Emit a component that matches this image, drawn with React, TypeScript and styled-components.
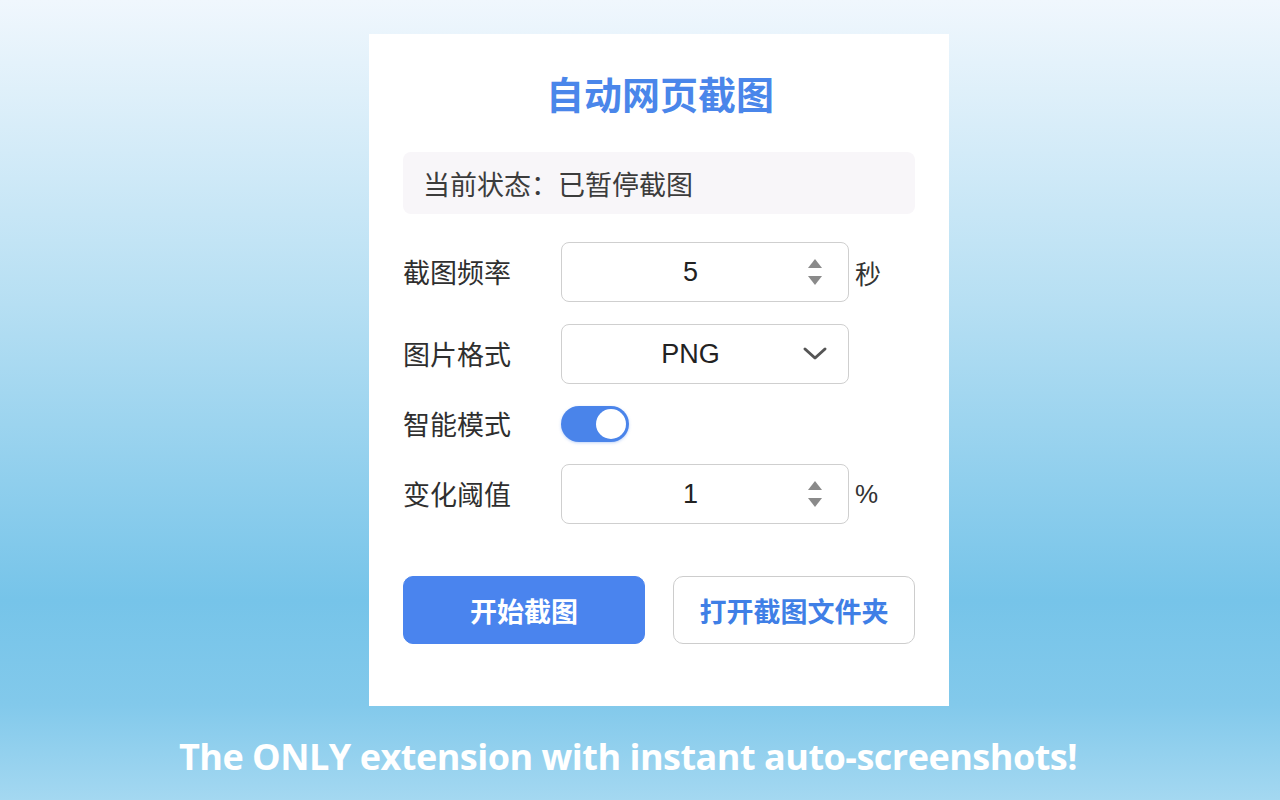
import React from 'react'
import styled, { createGlobalStyle } from 'styled-components'

const GlobalStyle = createGlobalStyle`
  html, body {
    margin: 0;
    padding: 0;
    height: 100%;
  }
  body {
    font-family: 'Noto Sans CJK SC', 'Noto Sans', sans-serif;
  }
`

const Page = styled.div`
  width: 1280px;
  height: 800px;
  overflow: hidden;
  display: flex;
  flex-direction: column;
  align-items: center;
  padding-top: 34px;
  box-sizing: border-box;
  background: linear-gradient(to bottom, #f0f7fd 0%, #b6dff3 38%, #76c4e9 75%, #82c9eb 88%, #a4d8f1 100%);
`

const Card = styled.div`
  width: 580px;
  height: 672px;
  margin-left: 38px;
  box-sizing: border-box;
  background: #fff;
  padding: 33px 34px 0;
  display: flex;
  flex-direction: column;
`

const Title = styled.h1`
  margin: 0;
  text-align: center;
  font-size: 38px;
  line-height: 52px;
  font-weight: 700;
  color: #4a86ea;
  padding-left: 2px;
`

const Status = styled.div`
  margin-top: 33px;
  height: 62px;
  border-radius: 8px;
  background: #f8f6f9;
  display: flex;
  align-items: center;
  padding-left: 20px;
  font-size: 27px;
  color: #3c3c3c;
`

const Form = styled.div`
  margin-top: 28px;
  display: flex;
  flex-direction: column;
  gap: 22px;
`

const Row = styled.div`
  display: flex;
  align-items: center;
`

const Label = styled.div`
  width: 158px;
  font-size: 27px;
  line-height: 36px;
  color: #2f2f2f;
`

const Field = styled.div`
  width: 288px;
  height: 60px;
  box-sizing: border-box;
  border: 1px solid #cfcfcf;
  border-radius: 8px;
  display: flex;
  align-items: center;
  font-family: 'Liberation Sans', Arial, sans-serif;
  font-size: 27px;
  color: #222;
`

const Value = styled.div`
  flex: 1;
  text-align: center;
  padding-left: 37px;
`

const Side = styled.div`
  width: 66px;
  display: flex;
  justify-content: center;
  align-items: center;
`

const Unit = styled.div<{ $latin?: boolean }>`
  margin-left: 6px;
  font-size: 26px;
  color: #333;
  font-family: ${p => (p.$latin ? "'Liberation Sans', Arial, sans-serif" : "'Noto Sans CJK SC', sans-serif")};
`

const Toggle = styled.div`
  width: 68px;
  height: 36px;
  border-radius: 18px;
  background: #4a84ea;
  display: flex;
  align-items: center;
  justify-content: flex-end;
  padding-right: 3px;
  box-sizing: border-box;
  box-shadow: 0 1px 3px rgba(74, 132, 234, 0.35);
`

const Knob = styled.div`
  width: 30px;
  height: 30px;
  border-radius: 50%;
  background: #fff;
`

const Buttons = styled.div`
  margin-top: 52px;
  display: flex;
  justify-content: space-between;
`

const Button = styled.button<{ $primary?: boolean }>`
  width: 242px;
  height: 68px;
  border-radius: 10px;
  font-family: 'Noto Sans CJK SC', sans-serif;
  font-size: 27px;
  font-weight: 700;
  cursor: pointer;
  border: 1px solid ${p => (p.$primary ? '#4a84ee' : '#cdcdcd')};
  background: ${p => (p.$primary ? '#4a84ee' : '#fff')};
  color: ${p => (p.$primary ? '#fff' : '#3f7fe6')};
`

const Caption = styled.div`
  margin-top: 26px;
  margin-right: 24px;
  font-family: 'Open Sans', sans-serif;
  font-weight: 700;
  font-size: 36px;
  letter-spacing: -0.5px;
  color: #fff;
`

const Spinner = () => (
  <svg width="18" height="30" viewBox="0 0 18 30">
    <path d="M9 2 L16 11 L2 11 Z" fill="#8a8a8a" />
    <path d="M9 28 L16 19 L2 19 Z" fill="#8a8a8a" />
  </svg>
)

const Chevron = () => (
  <svg width="26" height="16" viewBox="0 0 26 16">
    <path d="M3 3 L13 12 L23 3" fill="none" stroke="#555" strokeWidth="3" strokeLinecap="round" strokeLinejoin="round" />
  </svg>
)

export default function App() {
  return (
    <Page>
      <GlobalStyle />
      <Card>
        <Title>自动网页截图</Title>
        <Status>当前状态：已暂停截图</Status>
        <Form>
          <Row>
            <Label>截图频率</Label>
            <Field>
              <Value>5</Value>
              <Side>
                <Spinner />
              </Side>
            </Field>
            <Unit>秒</Unit>
          </Row>
          <Row>
            <Label>图片格式</Label>
            <Field>
              <Value>PNG</Value>
              <Side>
                <Chevron />
              </Side>
            </Field>
          </Row>
          <Row>
            <Label>智能模式</Label>
            <Toggle>
              <Knob />
            </Toggle>
          </Row>
          <Row>
            <Label>变化阈值</Label>
            <Field>
              <Value>1</Value>
              <Side>
                <Spinner />
              </Side>
            </Field>
            <Unit $latin>%</Unit>
          </Row>
        </Form>
        <Buttons>
          <Button $primary>开始截图</Button>
          <Button>打开截图文件夹</Button>
        </Buttons>
      </Card>
      <Caption>The ONLY extension with instant auto-screenshots!</Caption>
    </Page>
  )
}
